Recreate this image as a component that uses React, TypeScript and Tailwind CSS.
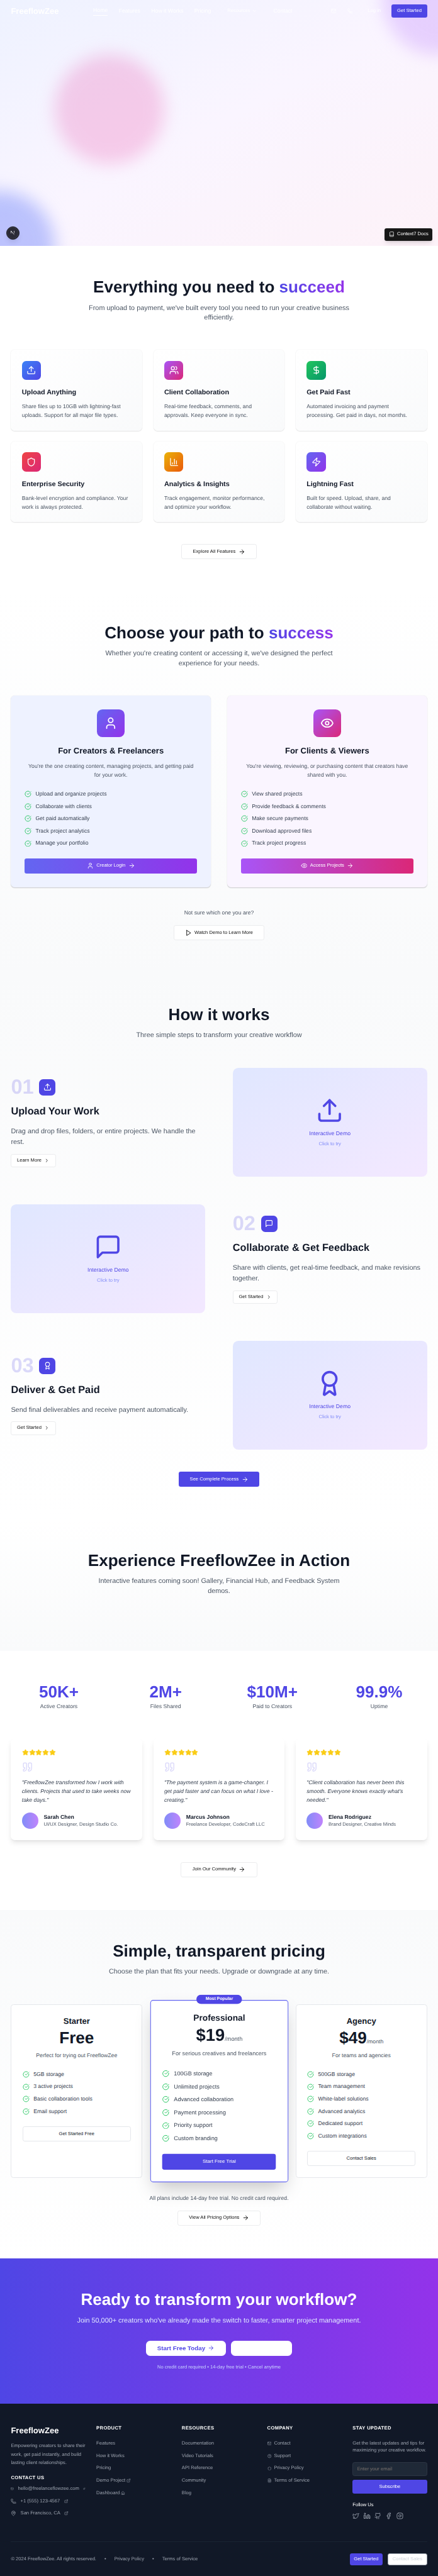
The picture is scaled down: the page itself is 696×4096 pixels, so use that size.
import React from "react";
import {
  ArrowRight,
  Award,
  Book,
  ChartColumn,
  ChevronDown,
  ChevronRight,
  CircleCheckBig,
  CircleQuestionMark,
  DollarSign,
  ExternalLink,
  Eye,
  Facebook,
  FileText,
  Github,
  House,
  Instagram,
  Linkedin,
  Mail,
  MapPin,
  Phone,
  Quote,
  Shield,
  Star,
  Twitter,
  Upload,
  User,
  Users,
  Zap,
} from "lucide-react";

type IconType = React.ComponentType<{ className?: string }>;

const iconProps = {
  viewBox: "0 0 24 24",
  fill: "none",
  stroke: "currentColor",
  strokeWidth: 2,
  strokeLinecap: "round" as const,
  strokeLinejoin: "round" as const,
};

function MessageSquare({ className }: { className?: string }) {
  return (
    <svg {...iconProps} className={className}>
      <path d="M21 15a2 2 0 0 1-2 2H7l-4 4V5a2 2 0 0 1 2-2h14a2 2 0 0 1 2 2z" />
    </svg>
  );
}

function PlayTriangle({ className }: { className?: string }) {
  return (
    <svg {...iconProps} className={className}>
      <polygon points="6 3 20 12 6 21 6 3" />
    </svg>
  );
}

function OutlineButton({ children }: { children: React.ReactNode }) {
  return (
    <button className="inline-flex h-11 items-center gap-2 rounded-md border border-[#ebecee] bg-white px-8 text-sm font-medium text-[#0a0a0a]">
      {children}
    </button>
  );
}

function Header() {
  return (
    <header className="relative z-10 flex h-16 items-center justify-between px-8 text-white">
      <div className="text-2xl font-bold">FreeflowZee</div>
      <nav className="flex items-center gap-8 text-base">
        <a className="relative top-0.5 border-b-2 border-white pb-1 leading-5">Home</a>
        <a>Features</a>
        <a>How it Works</a>
        <a>Pricing</a>
        <a className="flex items-center gap-1 px-4 text-sm">
          Resources
          <ChevronDown className="h-4 w-4" />
        </a>
        <a>Contact</a>
      </nav>
      <div className="flex items-center text-sm">
        <span className="mr-2 px-3">
          <Mail className="h-4 w-4" />
        </span>
        <span className="mr-4 px-3">
          <Phone className="h-4 w-4" />
        </span>
        <a className="mr-4 px-4">Log in</a>
        <button className="h-10 rounded-md bg-[#4f46e5] px-4 font-medium">Get Started</button>
      </div>
    </header>
  );
}

function Hero() {
  return (
    <section className="relative h-[720px] overflow-hidden bg-[linear-gradient(to_bottom_right,#eef2ff,#faf5ff,#fdf2f8)]">
      <div className="absolute -top-40 -right-40 h-80 w-80 rounded-full bg-[#d8b4fe] opacity-50 mix-blend-multiply blur-xl" />
      <div className="absolute -bottom-40 -left-40 h-80 w-80 rounded-full bg-[#a5b4fc] opacity-70 mix-blend-multiply blur-xl" />
      <div className="absolute top-40 left-40 h-80 w-80 rounded-full bg-[#f9a8d4] opacity-50 mix-blend-multiply blur-xl" />
      <Header />
      <div className="absolute bottom-[19px] left-[19px] flex h-[38px] w-[38px] items-center justify-center rounded-full border-2 border-[#17171c] bg-[#2b2b36] shadow-lg">
        <svg viewBox="0 0 38 38" className="h-[34px] w-[34px] shrink-0" fill="none">
          <defs>
            <linearGradient id="stem" x1="0" y1="12" x2="0" y2="24" gradientUnits="userSpaceOnUse">
              <stop offset="0.4" stopColor="#d4d4d8" />
              <stop offset="1" stopColor="#d4d4d8" stopOpacity="0" />
            </linearGradient>
            <linearGradient id="slash" x1="13" y1="12" x2="24" y2="26" gradientUnits="userSpaceOnUse">
              <stop offset="0.6" stopColor="#e4e4e7" />
              <stop offset="1" stopColor="#e4e4e7" stopOpacity="0.3" />
            </linearGradient>
          </defs>
          <circle cx="19" cy="19" r="18.2" stroke="#4a4a55" strokeWidth="1" />
          <rect x="12.4" y="12.4" width="1.9" height="9.5" fill="url(#stem)" />
          <rect x="22.9" y="12.4" width="1.7" height="9.5" fill="url(#stem)" />
          <path d="M13.2 12.4L24.6 26" stroke="url(#slash)" strokeWidth="2" />
        </svg>
      </div>
      <div className="absolute right-4 bottom-4 flex h-9 items-center gap-2 rounded-md bg-[#171717] px-3 text-sm font-medium text-white shadow-lg">
        <Book className="h-4 w-4" />
        Context7 Docs
      </div>
    </section>
  );
}

function SectionHeading({
  title,
  accent,
  sub,
  narrow,
}: {
  title: string;
  accent?: string;
  sub: string;
  narrow?: boolean;
}) {
  return (
    <div className="flex flex-col items-center text-center">
      <h2 className="mb-6 h-12 text-5xl leading-none font-bold whitespace-nowrap text-[#111827]">
        {title}
        {accent && (
          <span className="bg-[linear-gradient(to_right,#4f46e5,#9333ea)] bg-clip-text text-transparent">
            {accent}
          </span>
        )}
      </h2>
      <p className={`text-xl leading-7 text-[#4b5563] ${narrow ? "w-[672px]" : "w-[768px]"}`}>{sub}</p>
    </div>
  );
}

const features: { icon: IconType; tint: string; title: string; text: string }[] = [
  {
    icon: Upload,
    tint: "bg-[linear-gradient(to_bottom_right,#3b82f6,#4f46e5)]",
    title: "Upload Anything",
    text: "Share files up to 10GB with lightning-fast uploads. Support for all major file types.",
  },
  {
    icon: Users,
    tint: "bg-[linear-gradient(to_bottom_right,#a855f7,#db2777)]",
    title: "Client Collaboration",
    text: "Real-time feedback, comments, and approvals. Keep everyone in sync.",
  },
  {
    icon: DollarSign,
    tint: "bg-[linear-gradient(to_bottom_right,#22c55e,#059669)]",
    title: "Get Paid Fast",
    text: "Automated invoicing and payment processing. Get paid in days, not months.",
  },
  {
    icon: Shield,
    tint: "bg-[linear-gradient(to_bottom_right,#ef4444,#db2777)]",
    title: "Enterprise Security",
    text: "Bank-level encryption and compliance. Your work is always protected.",
  },
  {
    icon: ChartColumn,
    tint: "bg-[linear-gradient(to_bottom_right,#eab308,#ea580c)]",
    title: "Analytics & Insights",
    text: "Track engagement, monitor performance, and optimize your workflow.",
  },
  {
    icon: Zap,
    tint: "bg-[linear-gradient(to_bottom_right,#6366f1,#9333ea)]",
    title: "Lightning Fast",
    text: "Built for speed. Upload, share, and collaborate without waiting.",
  },
];

function Features() {
  return (
    <section className="h-[1012px] bg-white px-8 py-24">
      <div className="h-[128px]">
        <SectionHeading
          title="Everything you need to "
          accent="succeed"
          sub="From upload to payment, we've built every tool you need to run your creative business efficiently."
        />
      </div>
      <div className="mt-20 grid grid-cols-3 gap-8">
        {features.map(({ icon: Icon, tint, title, text }) => (
          <div
            key={title}
            className="h-[236px] rounded-xl bg-[linear-gradient(to_bottom_right,#ffffff,#f9fafb)] p-8 shadow-sm"
          >
            <div className={`mb-6 flex h-14 w-14 items-center justify-center rounded-xl text-white ${tint}`}>
              <Icon className="h-7 w-7" />
            </div>
            <h3 className="mb-3 h-7 text-xl leading-7 font-semibold text-[#111827]">{title}</h3>
            <p className="text-base leading-[26px] text-[#4b5563]">{text}</p>
          </div>
        ))}
      </div>
      <div className="mt-16 flex justify-center">
        <OutlineButton>
          Explore All Features
          <ArrowRight className="h-5 w-5" />
        </OutlineButton>
      </div>
    </section>
  );
}

function PathCard({
  bg,
  tint,
  buttonTint,
  icon: Icon,
  title,
  text,
  items,
  action,
}: {
  bg: string;
  tint: string;
  buttonTint: string;
  icon: IconType;
  title: string;
  text: string;
  items: string[];
  action: string;
}) {
  return (
    <div className={`h-[560px] rounded-xl p-10 shadow-sm ${bg}`}>
      <div className={`mx-auto mb-6 flex h-20 w-20 items-center justify-center rounded-2xl text-white ${tint}`}>
        <Icon className="h-10 w-10" />
      </div>
      <h3 className="mb-4 h-8 text-center text-2xl leading-8 font-bold text-[#111827]">{title}</h3>
      <p className="mb-8 h-[52px] text-center text-base leading-[26px] text-[#4b5563]">{text}</p>
      <ul className="mb-8 flex flex-col gap-3">
        {items.map((item) => (
          <li key={item} className="flex h-6 items-center gap-3 text-base text-[#374151]">
            <CircleCheckBig className="h-5 w-5 text-[#22c55e]" />
            {item}
          </li>
        ))}
      </ul>
      <button
        className={`flex h-11 w-full items-center justify-center gap-2 rounded-md text-sm font-medium text-white ${buttonTint}`}
      >
        <Icon className="h-5 w-5" />
        {action}
        <ArrowRight className="h-5 w-5" />
      </button>
    </div>
  );
}

function Paths() {
  return (
    <section className="h-[1116px] bg-[linear-gradient(to_bottom,#ffffff,#f9fafb)] px-8 py-24">
      <div className="h-[128px]">
        <SectionHeading
          narrow
          title="Choose your path to "
          accent="success"
          sub="Whether you're creating content or accessing it, we've designed the perfect experience for your needs."
        />
      </div>
      <div className="mt-20 grid grid-cols-2 gap-12">
        <PathCard
          bg="bg-[#eef2ff]"
          tint="bg-[linear-gradient(to_bottom_right,#6366f1,#9333ea)]"
          buttonTint="bg-[linear-gradient(to_right,#6366f1,#9333ea)]"
          icon={User}
          title="For Creators & Freelancers"
          text="You're the one creating content, managing projects, and getting paid for your work."
          items={[
            "Upload and organize projects",
            "Collaborate with clients",
            "Get paid automatically",
            "Track project analytics",
            "Manage your portfolio",
          ]}
          action="Creator Login"
        />
        <PathCard
          bg="bg-[#faf5ff]"
          tint="bg-[linear-gradient(to_bottom_right,#a855f7,#db2777)]"
          buttonTint="bg-[linear-gradient(to_right,#a855f7,#db2777)]"
          icon={Eye}
          title="For Clients & Viewers"
          text="You're viewing, reviewing, or purchasing content that creators have shared with you."
          items={[
            "View shared projects",
            "Provide feedback & comments",
            "Make secure payments",
            "Download approved files",
            "Track project progress",
          ]}
          action="Access Projects"
        />
      </div>
      <div className="mt-16 flex flex-col items-center gap-6">
        <p className="h-6 text-base leading-6 text-[#4b5563]">Not sure which one you are?</p>
        <OutlineButton>
          <PlayTriangle className="h-5 w-5" />
          Watch Demo to Learn More
        </OutlineButton>
      </div>
    </section>
  );
}

const steps: { num: string; icon: IconType; title: string; text: string; action: string }[] = [
  {
    num: "01",
    icon: Upload,
    title: "Upload Your Work",
    text: "Drag and drop files, folders, or entire projects. We handle the rest.",
    action: "Learn More",
  },
  {
    num: "02",
    icon: MessageSquare,
    title: "Collaborate & Get Feedback",
    text: "Share with clients, get real-time feedback, and make revisions together.",
    action: "Get Started",
  },
  {
    num: "03",
    icon: Award,
    title: "Deliver & Get Paid",
    text: "Send final deliverables and receive payment automatically.",
    action: "Get Started",
  },
];

function HowItWorks() {
  return (
    <section className="h-[1598.5px] bg-[linear-gradient(to_bottom,#f9fafb,#ffffff)] px-8 py-24">
      <div className="h-[100px]">
        <SectionHeading title="How it works" sub="Three simple steps to transform your creative workflow" />
      </div>
      <div className="mt-20 flex flex-col gap-20">
        {steps.map(({ num, icon: Icon, title, text, action }, i) => (
          <div key={num} className={`flex items-center gap-20 ${i % 2 ? "flex-row-reverse" : ""}`}>
            <div className="flex-1">
              <div className="mb-6 flex h-[60px] items-center gap-4">
                <span className="text-6xl leading-none font-bold text-[#4f46e5]/20">{num}</span>
                <div className="flex h-12 w-12 items-center justify-center rounded-xl bg-[#4f46e5] text-white">
                  <Icon className="h-6 w-6" />
                </div>
              </div>
              <h3 className="mb-6 h-9 text-3xl leading-9 font-bold text-[#111827]">{title}</h3>
              <p className="mb-4 text-xl leading-[32.5px] text-[#4b5563]">{text}</p>
              <button className="flex h-10 items-center gap-2 rounded-md border border-[#ebecee] bg-white px-4 text-sm font-medium text-[#0a0a0a]">
                {action}
                <ChevronRight className="h-4 w-4" />
              </button>
            </div>
            <div className="flex h-[319.5px] flex-1 flex-col items-center justify-center rounded-2xl bg-[linear-gradient(to_bottom_right,#e0e7ff,#f3e8ff)]">
              <Icon className="mb-4 h-20 w-20 text-[#4f46e5]" />
              <p className="h-6 text-base leading-6 font-medium text-[#4f46e5]">Interactive Demo</p>
              <p className="mt-2 h-5 text-sm leading-5 text-[#818cf8]">Click to try</p>
            </div>
          </div>
        ))}
      </div>
      <div className="mt-16 flex justify-center">
        <button className="flex h-11 items-center gap-2 rounded-md bg-[#4f46e5] px-8 text-sm font-medium text-white">
          See Complete Process
          <ArrowRight className="h-5 w-5" />
        </button>
      </div>
    </section>
  );
}

function Experience() {
  return (
    <section className="h-[384px] bg-[linear-gradient(to_bottom,#ffffff,#f9fafb)] px-8 pt-24">
      <SectionHeading
        title="Experience FreeflowZee in Action"
        sub="Interactive features coming soon! Gallery, Financial Hub, and Feedback System demos."
      />
    </section>
  );
}

const stats = [
  ["50K+", "Active Creators"],
  ["2M+", "Files Shared"],
  ["$10M+", "Paid to Creators"],
  ["99.9%", "Uptime"],
];

const quotes = [
  {
    text: "\"FreeflowZee transformed how I work with clients. Projects that used to take weeks now take days.\"",
    name: "Sarah Chen",
    role: "UI/UX Designer, Design Studio Co.",
  },
  {
    text: "\"The payment system is a game-changer. I get paid faster and can focus on what I love - creating.\"",
    name: "Marcus Johnson",
    role: "Freelance Developer, CodeCraft LLC",
  },
  {
    text: "\"Client collaboration has never been this smooth. Everyone knows exactly what's needed.\"",
    name: "Elena Rodriguez",
    role: "Brand Designer, Creative Minds",
  },
];

function SocialProof() {
  return (
    <section className="h-[758px] bg-white px-8 py-24">
      <div className="mb-20 grid h-20 grid-cols-4 gap-8 text-center">
        {stats.map(([value, label]) => (
          <div key={label}>
            <div className="mb-2 h-12 text-5xl leading-none font-bold text-[#4f46e5]">{value}</div>
            <div className="text-base leading-6 text-[#4b5563]">{label}</div>
          </div>
        ))}
      </div>
      <div className="grid grid-cols-3 gap-8">
        {quotes.map(({ text, name, role }) => (
          <div key={name} className="h-[298px] rounded-xl bg-white p-8 shadow-lg">
            <div className="mb-4 flex">
              {[0, 1, 2, 3, 4].map((n) => (
                <Star key={n} className="h-5 w-5 fill-[#facc15] text-[#facc15]" />
              ))}
            </div>
            <Quote className="mb-4 h-8 w-8 text-[#4f46e5]/20" />
            <p className="mb-6 h-[78px] text-base leading-[26px] text-[#374151] italic">{text}</p>
            <div className="flex items-center gap-4">
              <div className="h-12 w-12 rounded-full bg-[linear-gradient(to_right,#818cf8,#c084fc)]" />
              <div>
                <div className="text-base leading-6 font-semibold text-[#111827]">{name}</div>
                <div className="text-sm leading-5 text-[#4b5563]">{role}</div>
              </div>
            </div>
          </div>
        ))}
      </div>
      <div className="mt-16 flex justify-center">
        <OutlineButton>
          Join Our Community
          <ArrowRight className="h-5 w-5" />
        </OutlineButton>
      </div>
    </section>
  );
}

const plans = [
  {
    name: "Starter",
    price: "Free",
    per: "",
    text: "Perfect for trying out FreeflowZee",
    items: ["5GB storage", "3 active projects", "Basic collaboration tools", "Email support"],
    action: "Get Started Free",
    popular: false,
  },
  {
    name: "Professional",
    price: "$19",
    per: "/month",
    text: "For serious creatives and freelancers",
    items: [
      "100GB storage",
      "Unlimited projects",
      "Advanced collaboration",
      "Payment processing",
      "Priority support",
      "Custom branding",
    ],
    action: "Start Free Trial",
    popular: true,
  },
  {
    name: "Agency",
    price: "$49",
    per: "/month",
    text: "For teams and agencies",
    items: [
      "500GB storage",
      "Team management",
      "White-label solutions",
      "Advanced analytics",
      "Dedicated support",
      "Custom integrations",
    ],
    action: "Contact Sales",
    popular: false,
  },
];

function Pricing() {
  return (
    <section className="h-[1020px] bg-[linear-gradient(to_bottom,#f9fafb,#ffffff)] px-8 py-24">
      <div className="h-[100px]">
        <SectionHeading
          title="Simple, transparent pricing"
          sub="Choose the plan that fits your needs. Upgrade or downgrade at any time."
        />
      </div>
      <div className="mt-20 grid h-[508px] grid-cols-3 gap-8">
        {plans.map(({ name, price, per, text, items, action, popular }) => (
          <div
            key={name}
            className={`relative flex flex-col rounded-lg border-2 bg-white p-8 ${
              popular ? "scale-105 border-[#6366f1] shadow-2xl" : "border-[#e5e7eb]"
            }`}
          >
            {popular && (
              <div className="absolute -top-4 left-1/2 flex h-[26px] -translate-x-1/2 items-center rounded-full bg-[#4f46e5] px-[25px] text-xs font-semibold whitespace-nowrap text-white">
                Most Popular
              </div>
            )}
            <h3 className="mb-2 h-8 text-center text-2xl leading-8 font-bold text-[#111827]">{name}</h3>
            <div className="mb-4 h-12 text-center text-5xl leading-none font-bold text-[#111827]">
              {price}
              {per && <span className="text-base leading-none font-normal text-[#4b5563]">{per}</span>}
            </div>
            <p className="mb-8 h-6 text-center text-base leading-6 text-[#4b5563]">{text}</p>
            <ul className="mb-8 flex flex-col gap-3">
              {items.map((item) => (
                <li key={item} className="flex h-6 items-center gap-3 text-base text-[#374151]">
                  <CircleCheckBig className="h-5 w-5 text-[#22c55e]" />
                  {item}
                </li>
              ))}
            </ul>
            <button
              className={`h-11 w-full shrink-0 rounded-md text-sm font-medium ${
                popular ? "bg-[#4f46e5] text-white" : "border-2 border-[#e5e7eb] bg-white text-[#111827]"
              }`}
            >
              {action}
            </button>
          </div>
        ))}
      </div>
      <div className="mt-12 flex flex-col items-center gap-6">
        <p className="h-6 text-base leading-6 text-[#4b5563]">
          All plans include 14-day free trial. No credit card required.
        </p>
        <OutlineButton>
          View All Pricing Options
          <ArrowRight className="h-5 w-5" />
        </OutlineButton>
      </div>
    </section>
  );
}

function CallToAction() {
  return (
    <section className="flex h-[424.5px] flex-col items-center bg-[linear-gradient(to_right,#4f46e5,#9333ea)] py-24 text-center">
      <h2 className="mb-6 h-12 text-5xl leading-none font-bold text-white">Ready to transform your workflow?</h2>
      <p className="mb-10 h-[32.5px] text-xl leading-[32.5px] text-[#e0e7ff]">
        Join 50,000+ creators who've already made the switch to faster, smarter project management.
      </p>
      <div className="mb-6 flex gap-4">
        <button className="flex h-11 items-center gap-2 rounded-xl bg-white px-8 text-lg font-semibold text-[#4f46e5]">
          Start Free Today
          <ArrowRight className="h-5 w-5" />
        </button>
        <div className="h-11 w-[177px] rounded-xl bg-white" />
      </div>
      <p className="text-sm leading-5 text-[#c7d2fe]">No credit card required • 14-day free trial • Cancel anytime</p>
    </section>
  );
}

function FooterTitle({ children }: { children: React.ReactNode }) {
  return (
    <h4 className="h-5 text-sm leading-5 font-semibold tracking-wider text-white uppercase">{children}</h4>
  );
}

const contacts: { icon: IconType; text: string }[] = [
  { icon: Mail, text: "hello@freelanceflowzee.com" },
  { icon: Phone, text: "+1 (555) 123-4567" },
  { icon: MapPin, text: "San Francisco, CA" },
];

const company: { icon: IconType; text: string }[] = [
  { icon: Mail, text: "Contact" },
  { icon: CircleQuestionMark, text: "Support" },
  { icon: Shield, text: "Privacy Policy" },
  { icon: FileText, text: "Terms of Service" },
];

const product: { text: string; icon?: IconType }[] = [
  { text: "Features" },
  { text: "How it Works" },
  { text: "Pricing" },
  { text: "Demo Project", icon: ExternalLink },
  { text: "Dashboard", icon: House },
];

const socials: IconType[] = [Twitter, Linkedin, Github, Facebook, Instagram];

function Footer() {
  return (
    <footer className="h-[507px] bg-[#111827] px-8 pt-16 pb-8 text-sm leading-5 text-[#9ca3af]">
      <div className="grid h-[276px] grid-cols-5 gap-8">
        <div>
          <div className="mb-4 h-8 text-2xl leading-8 font-bold text-white">FreeflowZee</div>
          <p className="mb-6 h-[72px] leading-6">
            Empowering creators to share their work, get paid instantly, and build lasting client relationships.
          </p>
          <FooterTitle>Contact Us</FooterTitle>
          <ul className="mt-3 flex flex-col gap-4">
            {contacts.map(({ icon: Icon, text }) => (
              <li key={text} className="flex h-5 items-center gap-3 whitespace-nowrap">
                <Icon className="h-4 w-4" />
                {text}
                <ExternalLink className="h-3 w-3" />
              </li>
            ))}
          </ul>
        </div>
        <div>
          <FooterTitle>Product</FooterTitle>
          <ul className="mt-6 flex flex-col gap-4">
            {product.map(({ text, icon: Icon }) => (
              <li key={text} className="flex h-5 items-center gap-1">
                {text}
                {Icon && <Icon className="h-3 w-3" />}
              </li>
            ))}
          </ul>
        </div>
        <div>
          <FooterTitle>Resources</FooterTitle>
          <ul className="mt-6 flex flex-col gap-4">
            {["Documentation", "Video Tutorials", "API Reference", "Community", "Blog"].map((text) => (
              <li key={text} className="flex h-5 items-center">
                {text}
              </li>
            ))}
          </ul>
        </div>
        <div>
          <FooterTitle>Company</FooterTitle>
          <ul className="mt-6 flex flex-col gap-4">
            {company.map(({ icon: Icon, text }) => (
              <li key={text} className="flex h-5 items-center gap-2">
                <Icon className="h-3 w-3" />
                {text}
              </li>
            ))}
          </ul>
        </div>
        <div>
          <FooterTitle>Stay Updated</FooterTitle>
          <p className="my-6 h-10 whitespace-nowrap">
            Get the latest updates and tips for
            <br />
            maximizing your creative workflow.
          </p>
          <div className="mb-3 flex h-10 items-center rounded-md border border-[#2c3644] bg-[#1f2937] px-3 text-[#78716c]">
            Enter your email
          </div>
          <button className="h-10 w-full rounded-md bg-[#4f46e5] font-medium text-white">Subscribe</button>
          <h5 className="mt-6 mb-3 h-5 font-medium text-white">Follow Us</h5>
          <div className="flex gap-3">
            {socials.map((Icon, i) => (
              <Icon key={i} className="h-5 w-5" />
            ))}
          </div>
        </div>
      </div>
      <div className="mt-16 flex items-center justify-between border-t border-[#1a2433] pt-8">
        <div className="flex gap-6">
          <span>© 2024 FreeflowZee. All rights reserved.</span>
          <span>•</span>
          <a>Privacy Policy</a>
          <span>•</span>
          <a>Terms of Service</a>
        </div>
        <div className="flex gap-4">
          <button className="h-9 rounded-md bg-[#4f46e5] px-3 font-medium text-white">Get Started</button>
          <button className="h-9 rounded-md border border-[#9ca3af] bg-white px-3 font-medium text-[#d1d5db]">
            Contact Sales
          </button>
        </div>
      </div>
    </footer>
  );
}

export default function App() {
  return (
    <div className="h-[7538px] w-full overflow-hidden bg-[#111827] font-['Liberation_Sans',Arial,sans-serif] [text-rendering:geometricPrecision] [zoom:0.5434]">
      <Hero />
      <Features />
      <Paths />
      <HowItWorks />
      <Experience />
      <SocialProof />
      <Pricing />
      <CallToAction />
      <Footer />
    </div>
  );
}
